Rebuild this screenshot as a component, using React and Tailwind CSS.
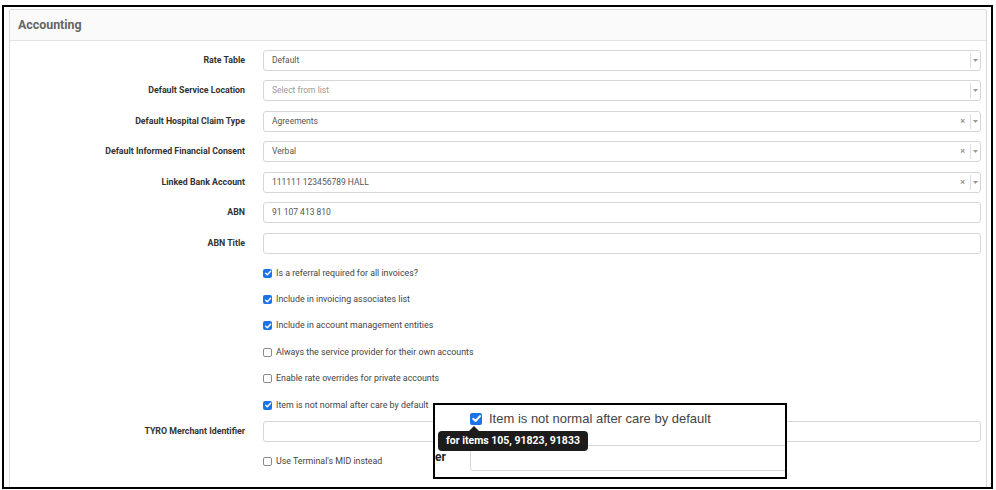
import React from 'react';

const font = { fontFamily: 'Roboto, "Liberation Sans", sans-serif' };

const Caret = () => (
  <svg width="5" height="3" viewBox="0 0 5 3">
    <path d="M0 0 L5 0 L2.5 3 Z" fill="#999" />
  </svg>
);

const Check = ({ size = 8 }) => (
  <svg width={size} height={size} viewBox="0 0 10 10">
    <path d="M2 5.2 L4.2 7.3 L8.2 2.8" fill="none" stroke="#fff" strokeWidth="1.8" strokeLinecap="round" strokeLinejoin="round" />
  </svg>
);

const Box = ({ checked }) =>
  checked ? (
    <span className="flex h-[9px] w-[9px] shrink-0 items-center justify-center rounded-[2px] bg-[#1a73e8]">
      <Check size={8} />
    </span>
  ) : (
    <span className="h-[9px] w-[9px] shrink-0 rounded-[2px] border border-[#8a8a8a] bg-white"></span>
  );

function Select({ value, placeholder, clearable }) {
  return (
    <div className="flex h-[21px] flex-1 items-center rounded-[3px] border border-[#d6d6d6] bg-white">
      <div className={`flex-1 pl-2 text-[8.5px] ${value ? 'text-[#555]' : 'text-[#999]'}`}>{value || placeholder}</div>
      {clearable && <span className="mr-[5px] text-[9px] font-bold leading-none text-[#999]">×</span>}
      <div className="flex h-[15px] w-[10px] items-center justify-center border-l border-[#ddd]">
        <Caret />
      </div>
    </div>
  );
}

function TextInput({ value }) {
  return (
    <div className="flex h-[21px] flex-1 items-center rounded-[3px] border border-[#d6d6d6] bg-white pl-2 text-[8.5px] text-[#555]">
      {value}
    </div>
  );
}

function Row({ label, children, className = 'h-[30.5px]' }) {
  return (
    <div className={`flex items-center gap-[18px] ${className}`}>
      <div className="w-[235px] shrink-0 text-right text-[8.8px] font-bold text-[#333]">{label}</div>
      {children}
    </div>
  );
}

function CheckRow({ label, checked, className = 'h-[26.4px]' }) {
  return (
    <div className={`flex items-center pl-[253px] ${className}`}>
      <Box checked={checked} />
      <span className="ml-[4px] text-[8.85px] text-[#444]">{label}</span>
    </div>
  );
}

export default function App() {
  return (
    <div className="relative h-[490px] w-[996px] overflow-hidden bg-white pb-[1px] pl-[2px] pr-[3px] pt-[5px]" style={font}>
      <div className="h-full overflow-hidden border-2 border-black pl-[5px] pr-[4px] pt-[2px]">
        <div className="h-[520px] rounded-[2px] border border-[#dcdcdc]">
          <div className="flex h-[31px] items-center border-b border-[#e3e3e3] bg-[#fafafa] px-2 text-[12.4px] font-bold text-[#666]">
            Accounting
          </div>
          <div className="pr-[5px] pt-[4px]">
            <Row label="Rate Table"><Select value="Default" /></Row>
            <Row label="Default Service Location"><Select placeholder="Select from list" /></Row>
            <Row label="Default Hospital Claim Type"><Select value="Agreements" clearable /></Row>
            <Row label="Default Informed Financial Consent"><Select value="Verbal" clearable /></Row>
            <Row label="Linked Bank Account"><Select value="111111 123456789 HALL" clearable /></Row>
            <Row label="ABN"><TextInput value="91 107 413 810" /></Row>
            <Row label="ABN Title"><TextInput /></Row>
            <CheckRow label="Is a referral required for all invoices?" checked className="mt-[1.5px] h-[26.4px]" />
            <CheckRow label="Include in invoicing associates list" checked />
            <CheckRow label="Include in account management entities" checked />
            <CheckRow label="Always the service provider for their own accounts" />
            <CheckRow label="Enable rate overrides for private accounts" />
            <CheckRow label="Item is not normal after care by default" checked />
            <Row label="TYRO Merchant Identifier" className="h-[26px]"><TextInput /></Row>
            <CheckRow label="Use Terminal's MID instead" className="h-[34px]" />
          </div>
        </div>
      </div>

      {/* zoomed callout */}
      <div className="absolute left-[433px] top-[403px] h-[76px] w-[354px] overflow-hidden border-2 border-black bg-white">
        <div className="flex items-center pl-[35px] pt-[4px]">
          <span className="flex h-[12px] w-[12px] items-center justify-center rounded-[2px] bg-[#1a73e8]">
            <Check size={11} />
          </span>
          <span className="ml-[7px] text-[13px] text-[#444]" style={{ fontFamily: '"Liberation Sans", Arial, sans-serif' }}>
            Item is not normal after care by default
          </span>
        </div>
        <div className="mt-[16px] flex items-center">
          <span className="-mt-[1px] w-[35px] text-[12px] font-bold leading-none text-[#222]">er</span>
          <div className="h-[26px] flex-1 -mr-[20px] rounded-[3px] border border-[#d6d6d6]"></div>
        </div>
        <div className="absolute left-[3px] top-[26px] flex h-[20px] items-center rounded-[4px] bg-[#1c1c1c] px-[8px] text-[10.5px] font-bold text-white">
          <span className="absolute -top-[5px] left-[31px] h-0 w-0 border-x-[5px] border-b-[5px] border-x-transparent border-b-[#1c1c1c]"></span>
          for items 105, 91823, 91833
        </div>
      </div>
    </div>
  );
}
